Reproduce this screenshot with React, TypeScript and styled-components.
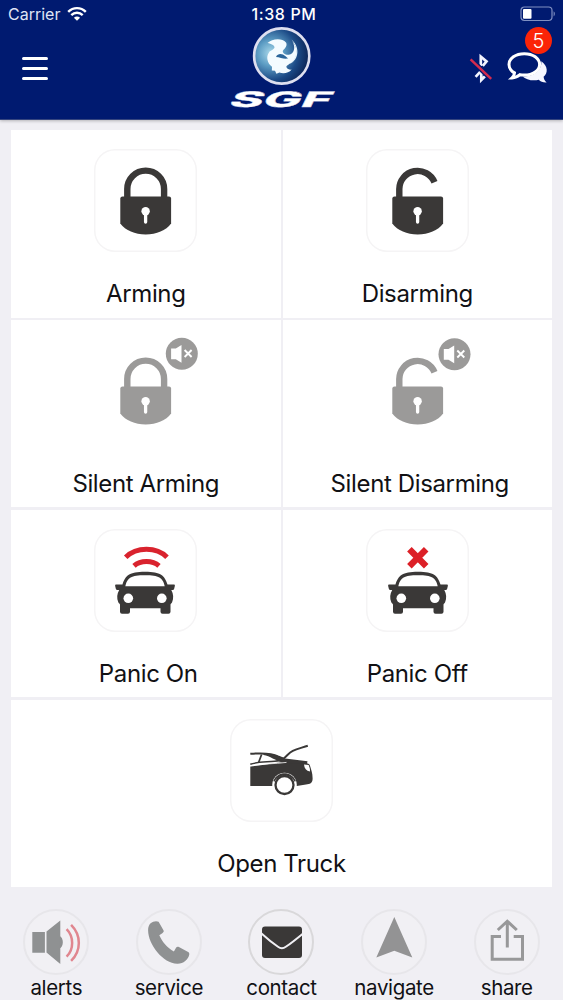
import React from 'react';
import styled, { createGlobalStyle } from 'styled-components';

const GlobalStyle = createGlobalStyle`
  * { box-sizing: border-box; }
  body {
    margin: 0;
    background: #f0eff4;
    font-family: Inter, "Liberation Sans", sans-serif;
    color: #111114;
  }
`;

const Screen = styled.div`
  width: 563px;
  height: 1000px;
  display: flex;
  flex-direction: column;
  overflow: hidden;
  background: #f0eff4;
`;

const Header = styled.header`
  height: 120px;
  flex: none;
  background: #001a70;
  border-bottom: 1px solid #35457f;
  box-shadow: 0 1px 3px rgba(0, 0, 0, 0.25);
  color: #fff;
`;

const StatusBar = styled.div`
  height: 28px;
  display: grid;
  grid-template-columns: 1fr auto 1fr;
  align-items: center;
  padding: 0 7px 0 8px;
  font-size: 16px;
`;

const Carrier = styled.div`
  display: flex;
  align-items: center;
  gap: 7px;
  color: #dfe4f5;
`;

const Clock = styled.div`
  font-weight: 500;
  font-size: 16px;
  letter-spacing: 0.6px;
  padding-left: 4px;
`;

const Battery = styled.div`
  display: flex;
  justify-content: flex-end;
`;

const NavBar = styled.div`
  height: 91px;
  display: grid;
  grid-template-columns: 1fr 108px 1fr;
`;

const MenuButton = styled.button`
  display: flex;
  flex-direction: column;
  justify-content: space-between;
  width: 26px;
  height: 23px;
  margin: 29px 0 0 22px;
  padding: 0;
  border: 0;
  background: none;
`;

const MenuLine = styled.span`
  height: 3.4px;
  border-radius: 2px;
  background: #fff;
`;

const HeaderActions = styled.div`
  display: flex;
  justify-content: flex-end;
  align-items: flex-start;
  gap: 14px;
  padding: 24px 14px 0 0;
`;

const BluetoothSlot = styled.div`
  padding-top: 1px;
  height: 32px;
`;

const ChatButton = styled.div`
  position: relative;
  height: 34px;
`;

const CountBadge = styled.span`
  position: absolute;
  top: -25px;
  right: -3px;
  width: 27px;
  height: 27px;
  border-radius: 50%;
  background: #fb2408;
  font-size: 20px;
  font-weight: 300;
  line-height: 28px;
  text-align: center;
`;

const Grid = styled.main`
  display: grid;
  grid-template-columns: 269.5px 269.5px;
  grid-template-rows: repeat(4, 187.5px);
  column-gap: 2px;
  row-gap: 2.4px;
  margin: 10px 11px 0;
`;

const Cell = styled.div<{ $wide?: boolean }>`
  grid-column: ${(p) => (p.$wide ? '1 / -1' : 'auto')};
  display: flex;
  flex-direction: column;
  align-items: center;
  padding-top: 19px;
  background: #fff;
`;

const Tile = styled.div<{ $plain?: boolean }>`
  width: 103px;
  height: 103px;
  border-radius: 21px;
  box-shadow: ${(p) => (p.$plain ? 'none' : 'inset 0 0 0 1.5px #f5f4f5')};
`;

const Label = styled.div<{ $indent?: number }>`
  margin-top: 27px;
  padding-left: ${(p) => p.$indent ?? 0}px;
  font-size: 24px;
  line-height: 30px;
  letter-spacing: -0.37px;
  white-space: nowrap;
`;

const TabBar = styled.nav`
  display: grid;
  grid-template-columns: repeat(5, 1fr);
  margin-top: 22px;
`;

const Tab = styled.div`
  display: flex;
  flex-direction: column;
  align-items: center;
`;

const TabCircle = styled.div<{ $strong?: boolean }>`
  width: 66px;
  height: 66px;
  border-radius: 50%;
  border: ${(p) => (p.$strong ? '2px solid #d9d8da' : '2px solid #e7e6ea')};
  background: #f1f0f4;
  display: flex;
`;

const TabLabel = styled.div`
  font-size: 20.5px;
  line-height: 26px;
  letter-spacing: -0.35px;
`;

const Art = styled.svg`
  display: block;
  overflow: visible;
`;

const DARK = '#3a3837';
const GREY = '#9b9a99';

function WifiIcon() {
  return (
    <Art width="20" height="14" viewBox="0 0 20 14" fill="none" stroke="#fff" strokeWidth="2.4">
      <path d="M1.2 4.9C6.2-.2 13.8-.2 18.8 4.9" />
      <path d="M4.3 8.1c3.3-3.2 8.1-3.2 11.4 0" />
      <path d="M6.9 10.7C8.6 9 11.4 9 13.1 10.7L10 13.8z" fill="#fff" stroke="none" />
    </Art>
  );
}

function BatteryIcon() {
  return (
    <Art width="36" height="16" viewBox="0 0 36 16">
      <rect x="1" y="1" width="31" height="13.5" rx="3.4" fill="none" stroke="#8090c2" strokeWidth="1.2" />
      <rect x="3" y="3" width="8.5" height="9.8" rx="1" fill="#fff" />
      <path d="M33.6 5.3c1.7.9 1.7 4.2 0 5.1z" fill="#8090c2" />
    </Art>
  );
}

function BrandLogo() {
  return (
    <Art width="108" height="91" viewBox="0 0 108 91">
      <defs>
        <radialGradient id="orb" cx="0.3" cy="0.45" r="0.72">
          <stop offset="0" stopColor="#a9d8ea" />
          <stop offset="0.32" stopColor="#5d9dc4" />
          <stop offset="0.68" stopColor="#1c4a86" />
          <stop offset="1" stopColor="#0b2052" />
        </radialGradient>
      </defs>
      <circle cx="53.7" cy="28" r="27.6" fill="url(#orb)" stroke="#dedff0" strokeWidth="2.6" />
      <path
        d="M39.5 15C44 10.500 54 9.600 58 14.400c1.700 3-.8 5.600-3 8-1.200 2.200 2.400 4.800 5.800 4.400 5.400-.8 7-7.400 3.800-13 6.700 7.600 4.200 17-1 20.600-3.400 2.500-5.700 3-5.100 4.800.4 1.700 2.800 2.600 5.200 2.400-3 4-9 4.400-12.300 3l-3 1.100-1.400-3-3.200-.3.2-3.600c-4.800-3.800-6.200-10.200-3-14.400 1.600-2.200 5-2.600 5.500-4.800.2-2.500-3.400-3.700-7-4.600z"
        fill="#f4fbff"
      />
      <path d="M63.500 11.500c8.400 7.200 8 19.600-1.700 24.600C70.700 28.300 69.500 19 63.500 11.500z" fill="#e5f3fb" />
      <path d="M48 29c1.400-3 4.200-3.500 7-2.400 3 1.600 3.700 3.300 5.300 3.600-3.600 1.500-8-1-12.300-1.200z" fill="#2b659a" />
      <text
        transform="translate(-0.500 79.200) skewX(-26)"
        fontFamily="Inter, sans-serif"
        fontSize="21.500"
        fontWeight="800"
        fill="#fff"
        stroke="#d6d9ea"
        strokeWidth="0.300"
        textLength="101"
        lengthAdjust="spacingAndGlyphs"
      >
        SGF
      </text>
    </Art>
  );
}

function BluetoothOffIcon() {
  return (
    <Art width="24" height="30" viewBox="0 0 24 30" fill="none">
      <path d="M11.800 13V3.600l5.700 4.900-3.700 4.300M6.600 23.800l5.700-6.200v9.400l4.700-4.700-5.200-5.300" stroke="#f2f4ff" strokeWidth="2.700" />
      <path d="M1.600 6.400l20.600 19.400" stroke="#001a70" strokeWidth="5.200" />
      <path d="M1.600 6.400l20.600 19.400" stroke="#d42b4e" strokeWidth="2.500" />
    </Art>
  );
}

function ChatIcon() {
  return (
    <Art width="42" height="33" viewBox="0 0 42 33">
      <path
        d="M34.400 9.200c6.600 4.800 6.800 11.800 2.200 15.600.2 2.600 1.300 4.200 3 5.800-3.600.2-6-1-7.800-2.800-6.400 1.500-13-.3-16.200-3.400 10.800.2 19.200-5.400 18.800-15.200z"
        fill="#f6f7ff"
      />
      <path
        d="M17.300 1.700c8.700 0 15.300 4.800 15.300 10.700s-6.600 10.700-15.300 10.700c-1.500 0-3-.1-4.300-.4-2.400 2.200-5 3.100-8 3.200 1.700-1.500 2.400-3 2.500-5C4.200 18.900 2 15.900 2 12.400 2 6.500 8.600 1.700 17.300 1.700z"
        fill="#001a70"
        stroke="#fff"
        strokeWidth="3"
      />
    </Art>
  );
}

function LockArt({ open, muted }: { open?: boolean; muted?: boolean }) {
  const color = muted ? GREY : DARK;
  return (
    <Art width="103" height="103" viewBox="0 0 103 103">
      <path
        d={open ? 'M33.300 50V40a18.300 18.300 0 0 1 35.200-6.800' : 'M33.300 50V40a18.300 18.300 0 0 1 36.800 0v10'}
        fill="none"
        stroke={color}
        strokeWidth="6.400"
      />
      <path
        d="M28.500 47.500H75q2.100 0 2.100 2.100V74.500C72 81.500 62.500 85.400 51.700 85.400S31.500 81.500 26.300 74.500V49.600q0-2.100 2.200-2.100z"
        fill={color}
      />
      <circle cx="51.600" cy="62.300" r="4.200" fill="#fff" />
      <path d="M51.600 63v10" stroke="#fff" strokeWidth="3.300" strokeLinecap="round" />
      {muted && (
        <g transform={open ? 'translate(88.500 15.300)' : 'translate(87.800 14.800)'}>
          <circle r="16" fill={GREY} />
          <path d="M-10.700-5.200h4.700L-.3-8.700V9L-6 5.500h-4.700z" fill="#fff" />
          <path d="M2.800-3.800l7 7m0-7l-7 7" stroke="#fff" strokeWidth="1.900" />
        </g>
      )}
    </Art>
  );
}

function CarFront({ dx = 0 }: { dx?: number }) {
  return (
    <g transform={`translate(${dx} 0)`}>
      <path
        d="M22 55.500h6.500C31.500 46.500 35 42.800 51 42.800S70.500 46.500 73.500 55.500H80q1 0 .9 1.200l-.8 3.300q-.3 1-1.400 1h-1.400c2.200 3.800 2.500 8.400.8 12.300-.4 1-1.600 1.500-1.600 2.500v7q0 2-2 2h-6q-2 0-2-2v-3.500H36v3.500q0 2-2 2h-6q-2 0-2-2v-7c0-1-1.300-1.500-1.700-2.500-1.700-3.900-1.400-8.500.9-12.300h-1.900q-1.100 0-1.400-1L21.100 56.700q-.1-1.200.9-1.200z"
        fill={DARK}
      />
      <path d="M31.300 57.200C33.200 48.800 37 46.300 51 46.300s17.800 2.500 19.700 10.900z" fill="#fff" />
      <circle cx="34.300" cy="69.300" r="4.800" fill="#fff" />
      <circle cx="67.800" cy="69.300" r="4.800" fill="#fff" />
    </g>
  );
}

function PanicOnArt() {
  return (
    <Art width="103" height="103" viewBox="0 0 103 103">
      <g fill="none" stroke="#d9232e" strokeWidth="5">
        <path d="M31.700 28.300C42.500 17.700 62.500 17.700 73 28.300" />
        <path d="M40 36.800C46.500 31 58.500 31 65 36.800" />
      </g>
      <CarFront />
    </Art>
  );
}

function PanicOffArt() {
  return (
    <Art width="103" height="103" viewBox="0 0 103 103">
      <path d="M43.400 20.300l16.800 17m0-17l-16.800 17" stroke="#dc2027" strokeWidth="6.400" />
      <CarFront dx={1} />
    </Art>
  );
}

function TrunkArt() {
  return (
    <Art width="103" height="103" viewBox="0 0 103 103">
      <path
        d="M20.300 47.500C30 46.200 45 44.300 57 42.300l15 .4 5 1.500c1.800.6 2.600 1 2.900 2.200C81 50 82.800 54.500 82.600 60c-.2 4.200-2.600 5-6.600 5.600L66.800 67H20.300z"
        fill={DARK}
      />
      <path
        d="M20.300 34.800C31 34 42 34.200 48 37.300l5.500 2.300c4-3.300 5.500-6 9.300-7.800 4.600-2.200 10.200-3.300 15-5.100"
        fill="none"
        stroke={DARK}
        strokeWidth="2"
      />
      <path d="M33.500 35c4.500-.6 9 0 12.800 1.500l8.800 3.100 22.400 2.700-.6 3-24.500-1.700C45.500 41.500 40 37 33.500 36z" fill={DARK} />
      <path d="M20.300 45.300C28 42.200 40 43.500 50 41.600" fill="none" stroke={DARK} strokeWidth="1.500" />
      <path d="M31.600 35.500l-3.100 8.200" stroke={DARK} strokeWidth="1.700" />
      <path d="M20.300 46.800C33 44.600 44 45 56.500 43.400" fill="none" stroke="#fff" strokeWidth="0.800" />
      <path d="M74 45.400l4.700.7c1 2.800 1.500 4.500 1.200 6.300-3.500-.6-5.600-3-5.900-7z" fill="#fff" />
      <circle cx="54.500" cy="66" r="12.300" fill="#fff" />
      <path d="M43.300 62c4.300-10.300 18-10.300 22.600 0l-1.200.7c-4.400-8.400-16-8.400-20.200 0z" fill={DARK} />
      <circle cx="54.500" cy="66" r="9" fill="#fff" stroke={DARK} strokeWidth="2.300" />
    </Art>
  );
}

function AlertsArt() {
  return (
    <Art width="62" height="62" viewBox="0 0 62 62">
      <g transform="translate(0.300 0.500)">
        <path d="M7 20.500h12.600v20.700H7zM21.200 20L35 9v43.500L21.200 41z" fill="#8f9192" />
        <path d="M34 24.500c4.700 1 4.700 11.500 0 12.500z" fill="#8f9192" />
        <g fill="none" stroke="#e0868f" strokeWidth="2.500">
          <path d="M41.300 17.700c7.400 7.500 7.400 20 0 27.500" />
          <path d="M45.800 13.400c10.300 10.300 10.300 25.800 0 36" />
        </g>
      </g>
    </Art>
  );
}

function PhoneArt() {
  return (
    <Art width="62" height="62" viewBox="0 0 62 62">
      <path
        transform="translate(1.300 0.800)"
        d="M11.300 11.500c2.300-2 5.800-2.700 8-1.500l5 8.700c.4 1 0 1.700-1 2.400l-3.300 2.400c3.200 7.200 7.800 12.300 14.600 16.200l2-3.500c.7-1.200 1.800-1.600 3-1l8.800 4.700c1.400.8 1.900 1.700 1.500 3.100-1.200 5.300-5.600 8.700-11.500 8.900C24.300 52.400 8.800 33 8.800 18.500c0-3 .9-5.400 2.500-7z"
        fill="#8f9192"
      />
    </Art>
  );
}

function MailArt() {
  return (
    <Art width="62" height="62" viewBox="0 0 62 62">
      <rect x="12" y="15.500" width="40" height="31.500" rx="3" fill={DARK} />
      <path d="M11.500 22.500c5.500 5 11 9.500 16.500 13.300 2.700 1.900 5.100 1.900 7.800 0 5.700-3.900 11-8.200 16.700-12.900" fill="none" stroke="#f1f0f4" strokeWidth="2" />
    </Art>
  );
}

function NavigateArt() {
  return (
    <Art width="62" height="62" viewBox="0 0 62 62">
      <path d="M31.300 6L49.300 46.500 31.300 39.700 13.300 46.500z" fill="#939394" />
    </Art>
  );
}

function ShareArt() {
  return (
    <Art width="62" height="62" viewBox="0 0 62 62" fill="none" stroke="#989899" strokeWidth="3">
      <path d="M25 25.500h-8.800v22.700h30.300V25.500h-8.800" />
      <path d="M31.300 36.500V10.500M21.800 19l9.500-8.800 9.500 8.800" />
    </Art>
  );
}

const actions = [
  { label: 'Arming', art: <LockArt /> },
  { label: 'Disarming', art: <LockArt open /> },
  { label: 'Silent Arming', art: <LockArt muted />, plain: true },
  { label: 'Silent Disarming', art: <LockArt open muted />, plain: true, indent: 5 },
  { label: 'Panic On', art: <PanicOnArt />, indent: 5 },
  { label: 'Panic Off', art: <PanicOffArt /> },
  { label: 'Open Truck', art: <TrunkArt />, wide: true },
];

const tabs = [
  { label: 'alerts', art: <AlertsArt /> },
  { label: 'service', art: <PhoneArt /> },
  { label: 'contact', art: <MailArt />, strong: true },
  { label: 'navigate', art: <NavigateArt /> },
  { label: 'share', art: <ShareArt /> },
];

export default function App() {
  return (
    <Screen>
      <GlobalStyle />
      <Header>
        <StatusBar>
          <Carrier>
            Carrier
            <WifiIcon />
          </Carrier>
          <Clock>1:38 PM</Clock>
          <Battery>
            <BatteryIcon />
          </Battery>
        </StatusBar>
        <NavBar>
          <MenuButton aria-label="Menu">
            <MenuLine />
            <MenuLine />
            <MenuLine />
          </MenuButton>
          <BrandLogo />
          <HeaderActions>
            <BluetoothSlot>
              <BluetoothOffIcon />
            </BluetoothSlot>
            <ChatButton>
              <ChatIcon />
              <CountBadge>5</CountBadge>
            </ChatButton>
          </HeaderActions>
        </NavBar>
      </Header>
      <Grid>
        {actions.map((a) => (
          <Cell key={a.label} $wide={a.wide}>
            <Tile $plain={a.plain}>{a.art}</Tile>
            <Label $indent={a.indent}>{a.label}</Label>
          </Cell>
        ))}
      </Grid>
      <TabBar>
        {tabs.map((t) => (
          <Tab key={t.label}>
            <TabCircle $strong={t.strong}>{t.art}</TabCircle>
            <TabLabel>{t.label}</TabLabel>
          </Tab>
        ))}
      </TabBar>
    </Screen>
  );
}
